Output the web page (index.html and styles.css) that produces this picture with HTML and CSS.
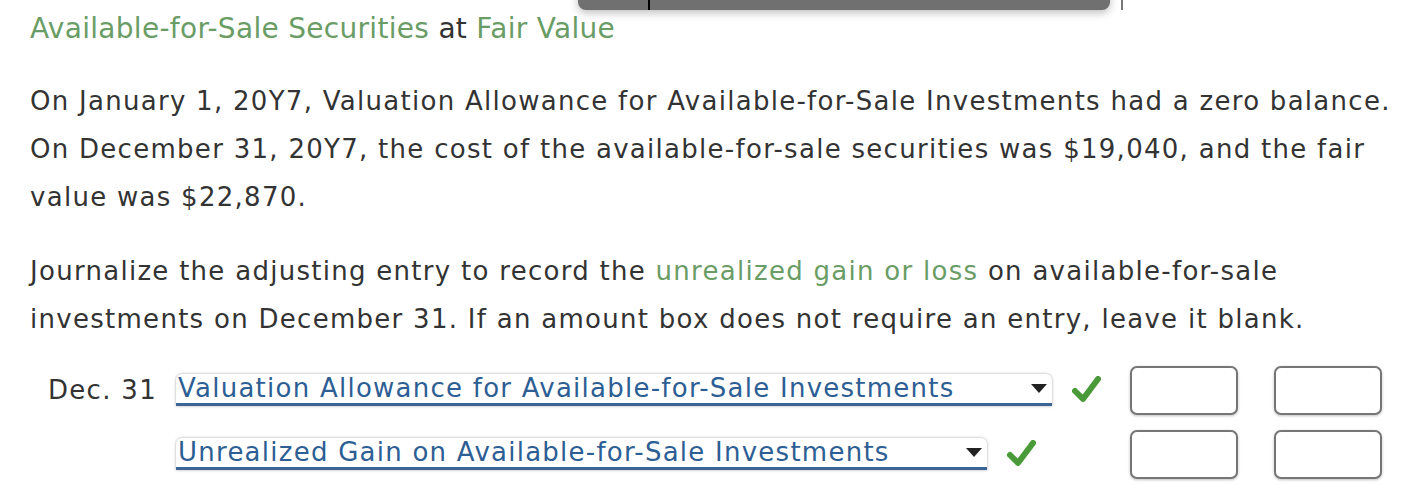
FILE: index.html
```html
<!DOCTYPE html>
<html>
<head>
<meta charset="utf-8">
<link rel="stylesheet" href="styles.css">
</head>
<body>
<div class="topbar"><span class="caret"></span></div>
<span class="edge"></span>
<div class="content">
  <h1 class="title"><span class="green">Available-for-Sale Securities</span> at <span class="green">Fair Value</span></h1>
  <p class="para">On January 1, 20Y7, Valuation Allowance for Available-for-Sale Investments had a zero balance. On December 31, 20Y7, the cost of the available-for-sale securities was $19,040, and the fair value was $22,870.</p>
  <p class="para para2">Journalize the adjusting entry to record the <span class="green">unrealized gain or loss</span> on available-for-sale investments on December 31. If an amount box does not require an entry, leave it blank.</p>
  <div class="entry">
    <div class="row">
      <div class="date">Dec. 31</div>
      <div class="select sel1"><span>Valuation Allowance for Available-for-Sale Investments</span><span class="arrow"></span></div>
      <svg class="check" width="30" height="28" viewBox="0 0 30 28"><path d="M3 15 L11 23 L26 3" fill="none" stroke="#4a9a3a" stroke-width="6" stroke-linejoin="round" stroke-linecap="round"/></svg>
      <div class="boxes"><div class="box"></div><div class="box"></div></div>
    </div>
    <div class="row">
      <div class="date"></div>
      <div class="select sel2"><span>Unrealized Gain on Available-for-Sale Investments</span><span class="arrow"></span></div>
      <svg class="check" width="30" height="28" viewBox="0 0 30 28"><path d="M3 15 L11 23 L26 3" fill="none" stroke="#4a9a3a" stroke-width="6" stroke-linejoin="round" stroke-linecap="round"/></svg>
      <div class="boxes"><div class="box"></div><div class="box"></div></div>
    </div>
  </div>
</div>
</body>
</html>
```
FILE: styles.css
```css
html, body {
  margin: 0;
  padding: 0;
  background: #fff;
}
body {
  font-family: "DejaVu Sans", Verdana, sans-serif;
  color: #333;
  position: relative;
  height: 496px;
  overflow: hidden;
}
.topbar {
  position: absolute;
  left: 578px;
  top: -10px;
  width: 532px;
  height: 20px;
  background: #707070;
  border-radius: 0 0 8px 8px;
  box-shadow: 0 3px 8px rgba(0,0,0,0.25);
}
.caret {
  position: absolute;
  left: 70px;
  top: 10px;
  width: 2px;
  height: 10px;
  background: #000;
}
.edge {
  position: absolute;
  left: 1121px;
  top: 0;
  width: 2px;
  height: 10px;
  background: #777;
}
.content {
  padding: 13px 0 0 30px;
}
.title {
  margin: 0;
  font-weight: normal;
  font-size: 28px;
  letter-spacing: 0.3px;
  line-height: 32px;
  color: #333;
}
.green {
  color: #6a9d65;
}
.para {
  margin: 32px 0 0 0;
  font-size: 26px;
  letter-spacing: 1.28px;
  line-height: 48px;
  width: 1378px;
}
.para2 {
  margin-top: 26px;
}
.entry {
  margin-top: 15px;
}
.row {
  display: flex;
  align-items: center;
  height: 64px;
}
.date {
  width: 146px;
  padding-left: 18px;
  box-sizing: border-box;
  font-size: 26px;
  letter-spacing: 1.3px;
}
.select {
  display: flex;
  align-items: center;
  justify-content: space-between;
  height: 32px;
  box-sizing: border-box;
  background: #fff;
  border-radius: 6px 6px 0 0;
  border-bottom: 3px solid #3a6596;
  box-shadow: 0 0 3px rgba(0,0,0,0.35);
  color: #2d5e94;
  font-size: 26px;
  letter-spacing: 1.25px;
  line-height: 29px;
  padding: 0 4px 0 2px;
  white-space: nowrap;
}
.sel1 { width: 876px; }
.sel2 { width: 811px; }
.arrow {
  width: 0;
  height: 0;
  border-left: 8px solid transparent;
  border-right: 8px solid transparent;
  border-top: 9px solid #222;
  margin-right: 1px;
}
.check {
  margin-left: 20px;
}
.boxes {
  display: flex;
  gap: 36px;
  margin-left: auto;
  margin-right: 44px;
}
.box {
  width: 108px;
  height: 49px;
  box-sizing: border-box;
  border: 2px solid #767676;
  border-radius: 7px;
  box-shadow: 0 1px 3px rgba(0,0,0,0.25);
  background: #fff;
}
```
